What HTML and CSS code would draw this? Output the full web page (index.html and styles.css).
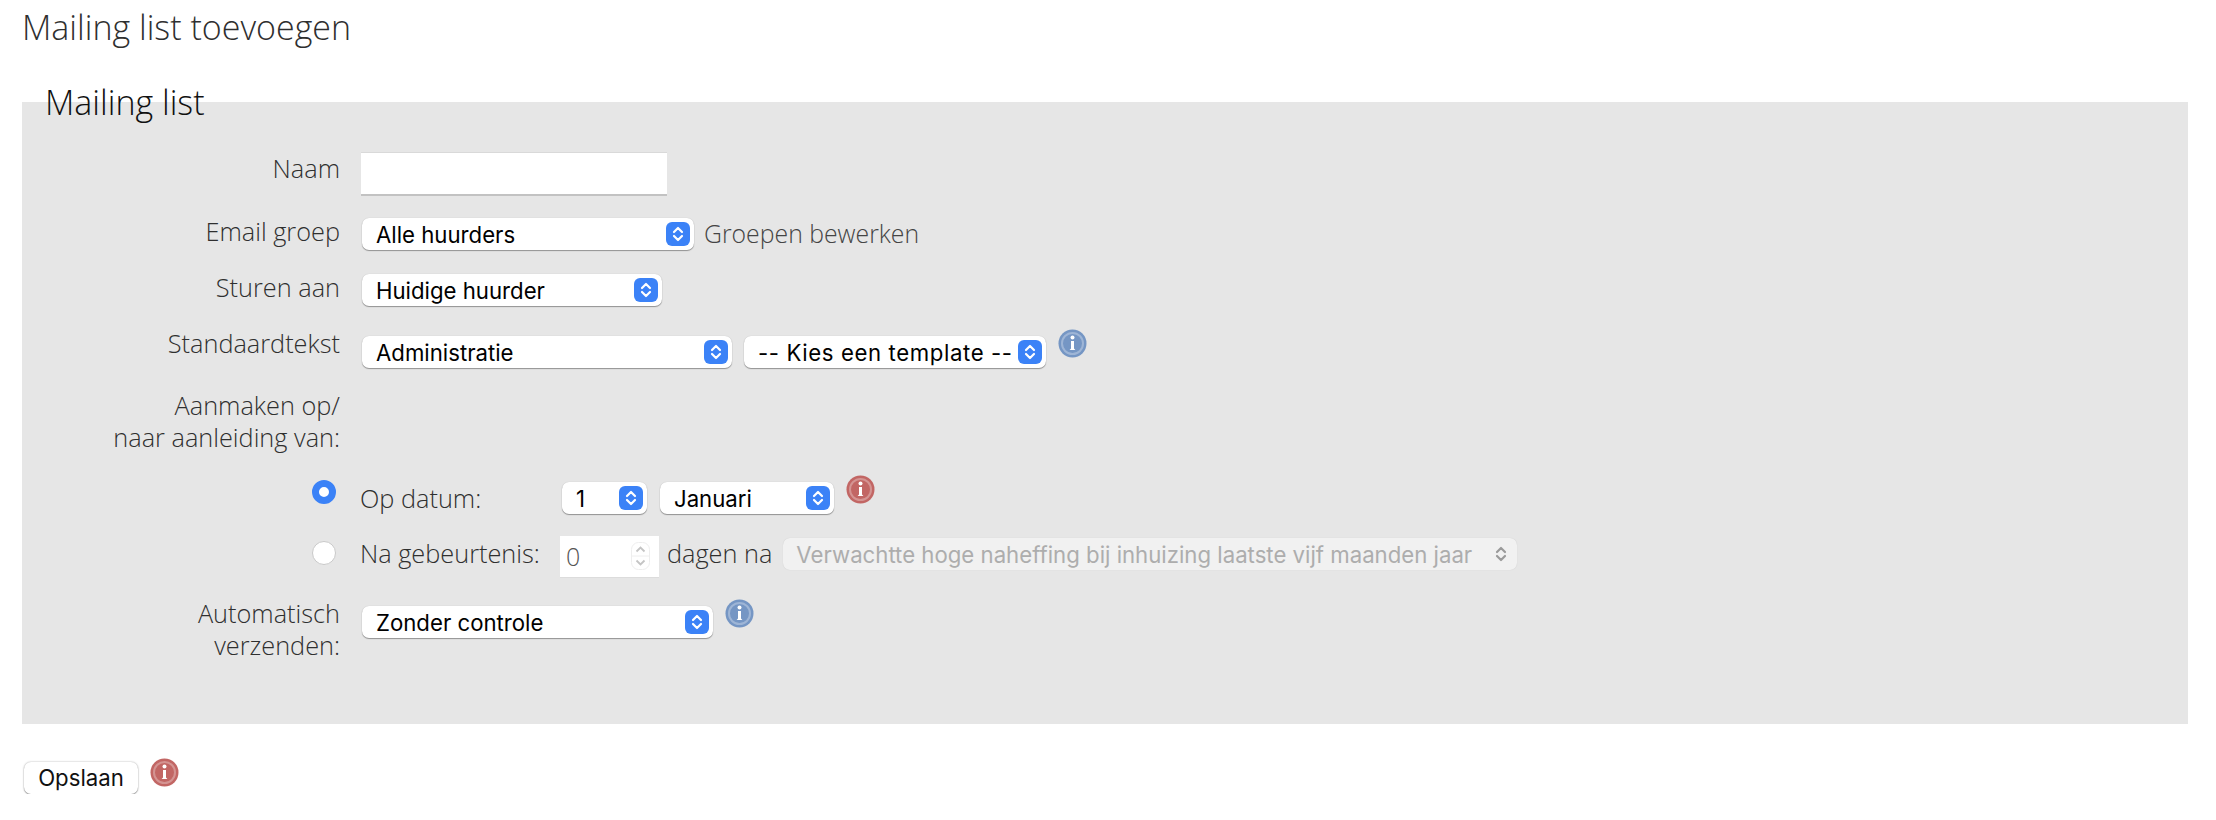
FILE: index.html
```html
<!DOCTYPE html>
<html lang="nl">
    <head>
        <meta charset="UTF-8" />
        <meta name="viewport" content="width=device-width, initial-scale=1.0" />
        <title>Mailing list toevoegen</title>
        <link rel="stylesheet" href="styles.css">
    </head>
    <body>
        <svg class="defs" width="0" height="0" aria-hidden="true">
            <symbol id="updown" viewBox="0 0 24 24">
                <path d="M8 10l4-4 4 4M8 14l4 4 4-4" fill="none" stroke="currentColor" stroke-width="2.2" stroke-linecap="round" stroke-linejoin="round"/>
            </symbol>
            <symbol id="info" viewBox="0 0 29 29">
                <circle cx="14.5" cy="14.5" r="14" fill="currentColor"/>
                <circle cx="14.5" cy="14.5" r="10.5" fill="none" stroke="#fff" stroke-opacity=".3" stroke-width="2"/>
                <circle cx="14.5" cy="8.6" r="2" fill="#fff"/>
                <path d="M13 12h3v7.5l1.4 1.5h-5.8l1.4-1.5z" fill="#fff"/>
            </symbol>
        </svg>

        <h1 class="page-title">Mailing list toevoegen</h1>

        <form id="mailing-form">
            <fieldset class="panel">
                <legend>Mailing list</legend>

                <div class="row row-naam">
                    <label for="naam">Naam</label>
                    <input type="text" id="naam" name="naam" class="text-input">
                </div>

                <div class="row">
                    <label for="groep">Email groep</label>
                    <div class="field">
                        <div class="select w-332">
                            <select id="groep"><option>Alle huurders</option></select>
                            <span class="knob"><svg><use href="#updown"/></svg></span>
                        </div>
                        <a class="link" href="#">Groepen bewerken</a>
                    </div>
                </div>

                <div class="row">
                    <label for="sturen">Sturen aan</label>
                    <div class="field">
                        <div class="select w-300">
                            <select id="sturen"><option>Huidige huurder</option></select>
                            <span class="knob"><svg><use href="#updown"/></svg></span>
                        </div>
                    </div>
                </div>

                <div class="row">
                    <label for="tekst">Standaardtekst</label>
                    <div class="field field-low">
                        <div class="select w-370">
                            <select id="tekst"><option>Administratie</option></select>
                            <span class="knob"><svg><use href="#updown"/></svg></span>
                        </div>
                        <div class="select select-template w-302">
                            <select id="template"><option>-- Kies een template --</option></select>
                            <span class="knob"><svg><use href="#updown"/></svg></span>
                        </div>
                        <svg class="hint hint-info"><use href="#info"/></svg>
                    </div>
                </div>

                <div class="row row-aanmaken">
                    <label>Aanmaken op/<br>naar aanleiding van:</label>
                </div>

                <div class="row row-datum">
                    <div class="radio-cell"><input type="radio" name="moment" id="op-datum" checked></div>
                    <div class="field field-tight">
                        <label class="inline w-202" for="op-datum">Op datum:</label>
                        <div class="select w-85">
                            <select id="dag"><option>1</option></select>
                            <span class="knob"><svg><use href="#updown"/></svg></span>
                        </div>
                        <div class="select w-174">
                            <select id="maand"><option>Januari</option></select>
                            <span class="knob"><svg><use href="#updown"/></svg></span>
                        </div>
                        <svg class="hint hint-error"><use href="#info"/></svg>
                    </div>
                </div>

                <div class="row row-event">
                    <div class="radio-cell"><input type="radio" name="moment" id="na-event"></div>
                    <div class="field field-event">
                        <label class="inline w-200" for="na-event">Na gebeurtenis:</label>
                        <div class="number">
                            <input type="number" value="0" disabled>
                            <svg class="spin" viewBox="0 0 19 28">
                                <rect x=".5" y=".5" width="18" height="27" rx="7" fill="#fff" stroke="#eee"/>
                                <path d="M1 14h17" stroke="#eee"/>
                                <path d="M5.500 9.500l4-4 4 4M5.500 18.500l4 4 4-4" fill="none" stroke="#c4c4c4" stroke-width="1.800"/>
                            </svg>
                        </div>
                        <span class="inline dagen">dagen na</span>
                        <div class="select select-off w-734">
                            <select disabled><option>Verwachtte hoge naheffing bij inhuizing laatste vijf maanden jaar</option></select>
                            <span class="knob"><svg><use href="#updown"/></svg></span>
                        </div>
                    </div>
                </div>

                <div class="row row-last">
                    <label for="verzenden">Automatisch<br>verzenden:</label>
                    <div class="field field-low">
                        <div class="select w-351">
                            <select id="verzenden"><option>Zonder controle</option></select>
                            <span class="knob"><svg><use href="#updown"/></svg></span>
                        </div>
                        <svg class="hint hint-info"><use href="#info"/></svg>
                    </div>
                </div>
            </fieldset>

            <div class="actions">
                <button type="submit">Opslaan</button>
                <svg class="hint hint-error"><use href="#info"/></svg>
            </div>
        </form>
    </body>
</html>
```

FILE: styles.css
```css
:root {
  --text: #2f2f2f;
  --panel: #e6e6e6;
  --blue: #3b82f7;
  --control-font: 'Inter', 'Liberation Sans', sans-serif;
  --control-shadow: 0 1px 1px rgba(0,0,0,0.35), 0 0 1px rgba(0,0,0,0.2);
}

* {
  box-sizing: border-box;
}

body {
  margin: 0;
  font-family: 'Open Sans', sans-serif;
  font-weight: 300;
  font-size: 25.3px;
  line-height: 32px;
  color: var(--text);
  background: #fff;
}

.defs {
  display: block;
  height: 0;
}

.page-title {
  margin: 0;
  padding: 5px 22px 0;
  font-size: 34px;
  line-height: 44px;
  font-weight: 300;
}

form {
  padding: 0 28px 0 22px;
}

.panel {
  margin: 31px 0 0;
  padding: 28px 0 63px;
  min-width: 0;
  border: 0;
  background: var(--panel);
}

legend {
  margin-left: 23px;
  padding: 0;
  font-size: 34px;
  line-height: 44px;
  font-weight: 300;
  color: #111;
}

.row {
  display: flex;
  align-items: flex-start;
  margin-bottom: 21px;
}

.row > label {
  flex: none;
  width: 318px;
  margin-right: 21px;
  text-align: right;
}

.row-naam { margin-bottom: 19px; }
.row-aanmaken { margin-bottom: 28px; }
.row-datum { margin-bottom: 22px; }
.row-event { margin-bottom: 19px; }
.row-last { margin-bottom: 0; }

.row-event .inline { padding-top: 1px; }

.text-input {
  width: 306px;
  height: 44px;
  border: 0;
  border-top: 1px solid #d9d9d9;
  border-bottom: 2px solid #c2c2c2;
  background: #fff;
}

.field {
  display: flex;
  align-items: flex-start;
  padding-top: 3px;
  padding-left: 1px;
}

.field-low { padding-top: 9px; }
.field-tight { padding-top: 1px; padding-left: 0; }
.field-event { padding-top: 0; padding-left: 0; }

.select {
  position: relative;
  flex: none;
  height: 32px;
  border-radius: 7px;
  background: #fff;
  box-shadow: var(--control-shadow);
}

.select + .select { margin-left: 12px; }
.field-tight .select + .select { margin-left: 13px; }

.select select {
  display: block;
  width: 100%;
  height: 32px;
  padding: 0 34px 0 14px;
  border: 0;
  background: transparent;
  appearance: none;
  font-family: var(--control-font);
  font-size: 22.2px;
  color: #000;
}

.select-template select {
  letter-spacing: 0.6px;
}

.knob {
  position: absolute;
  top: 4px;
  right: 4px;
  width: 24px;
  height: 24px;
  border-radius: 6px;
  background: var(--blue);
  color: #fff;
  pointer-events: none;
}

.knob svg {
  display: block;
  width: 24px;
  height: 24px;
}

.w-85 { width: 85px; }
.w-174 { width: 174px; }
.w-300 { width: 300px; }
.w-302 { width: 302px; }
.w-332 { width: 332px; }
.w-351 { width: 351px; }
.w-370 { width: 370px; }
.w-734 { width: 734px; }

.select-off {
  margin-top: 2px;
  margin-left: 11px;
  background: #f1f1f1;
  box-shadow: 0 0 1px rgba(0,0,0,0.15);
}

.select-off select {
  padding-left: 13px;
  color: #adadad;
  opacity: 1;
}

.select-off .knob {
  background: none;
  color: #9a9a9a;
}

.link {
  margin-left: 10px;
  margin-top: -1px;
  font-size: 24.8px;
  color: #444;
  text-decoration: none;
}

.hint {
  flex: none;
  width: 29px;
  height: 29px;
  margin-top: -7px;
}

.hint-info {
  margin-left: 12px;
  color: #7596c4;
}

.hint-error {
  margin-left: 12px;
  color: #c26664;
}

.radio-cell {
  flex: none;
  width: 338px;
  padding-right: 24px;
  display: flex;
  justify-content: flex-end;
}

.radio-cell input {
  display: block;
  width: 24px;
  height: 24px;
  margin: 5px 0 0;
  border: 1px solid #c9c9c9;
  border-radius: 50%;
  background: #fff;
  appearance: none;
}

.radio-cell input:checked {
  border: 7px solid var(--blue);
}

.row-datum .radio-cell input { margin-top: -1px; }

.inline { display: block; flex: none; }
.w-202 { width: 202px; }
.w-200 { width: 200px; }

.number {
  display: flex;
  align-items: center;
  flex: none;
  width: 99px;
  height: 42px;
  padding: 0 9px 1px 6px;
  border-bottom: 1px solid #dcdcdc;
  background: #fff;
}

.number input {
  width: 60px;
  flex: auto;
  min-width: 0;
  padding: 0;
  border: 0;
  background: transparent;
  appearance: textfield;
  font-family: 'Open Sans', sans-serif;
  font-size: 25px;
  font-weight: 300;
  color: #555;
}

.spin {
  flex: none;
  width: 19px;
  height: 28px;
}

.dagen {
  margin-left: 8px;
}

.actions {
  display: flex;
  align-items: flex-start;
  padding: 38px 0 0 2px;
}

button {
  width: 114px;
  height: 32px;
  padding: 0 0 1px;
  border: 0;
  border-radius: 7px;
  background: #fff;
  box-shadow: 0 1px 1px rgba(0,0,0,0.3), 0 0 2px rgba(0,0,0,0.35);
  font-family: var(--control-font);
  font-size: 22.2px;
  color: #111;
}

.actions .hint {
  margin-top: -4px;
}
```
